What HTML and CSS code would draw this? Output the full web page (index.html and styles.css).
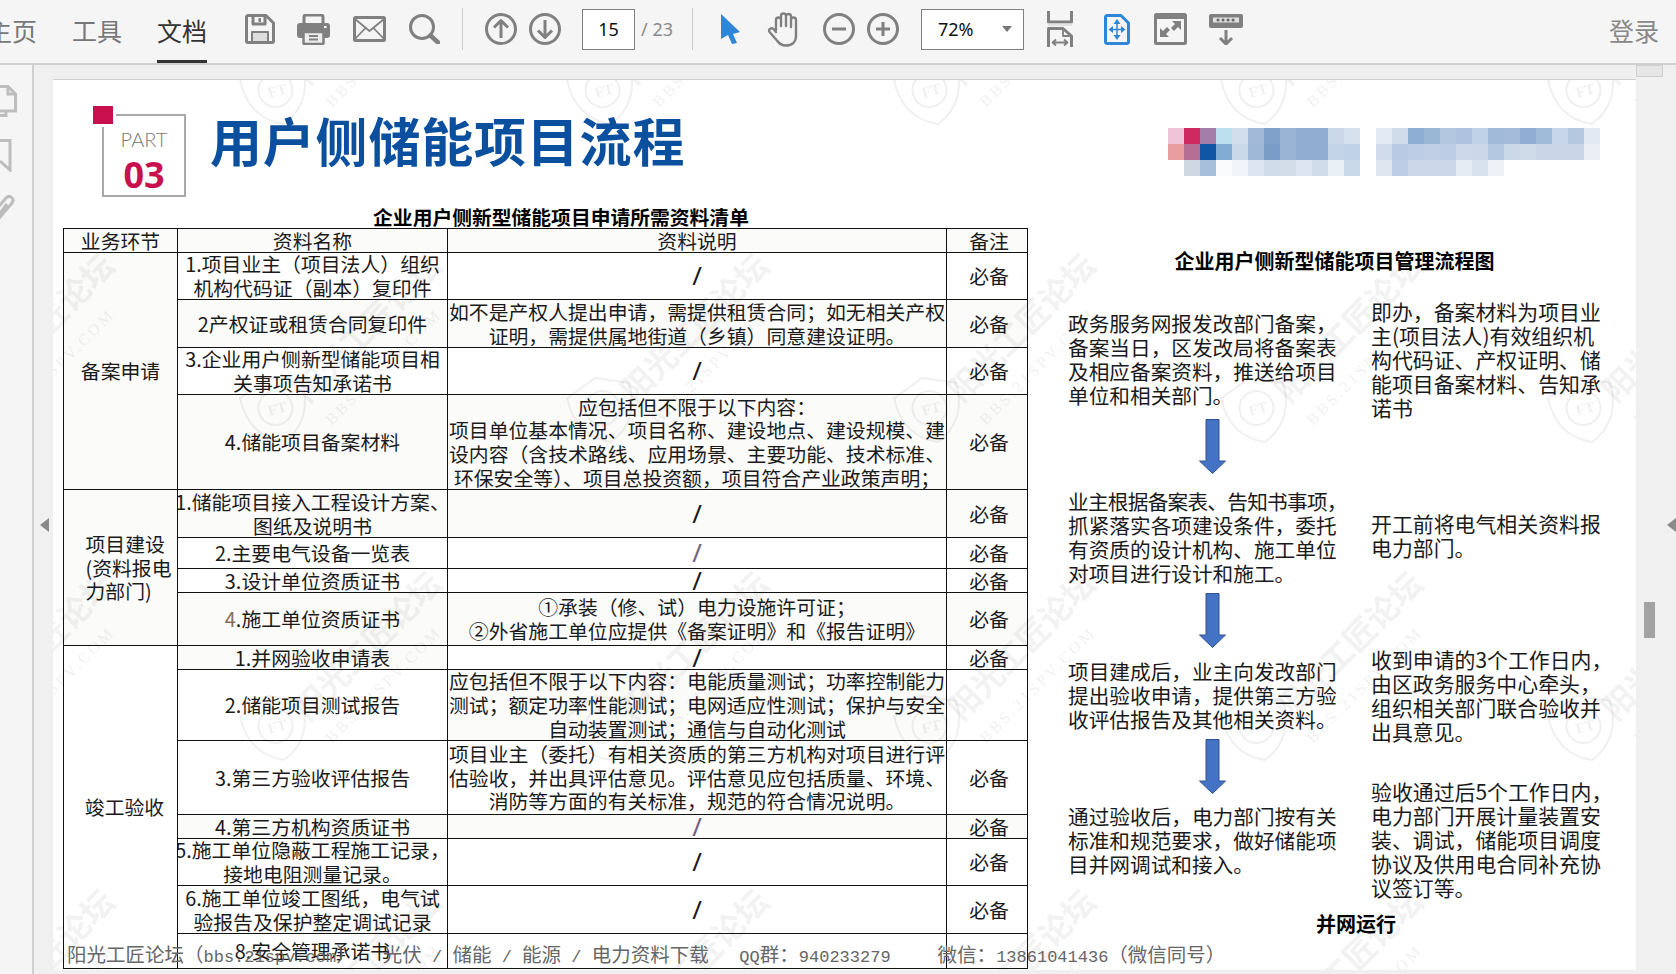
FILE: index.html
```html
<!DOCTYPE html>
<html lang="zh-CN">
<head>
<meta charset="utf-8">
<title>用户侧储能项目流程</title>
<link rel="stylesheet" href="styles.css">
</head>
<body>
<div class="app">
  <header class="toolbar">
    <nav class="tabs">
      <span class="tab">主页</span>
      <span class="tab">工具</span>
      <span class="tab active">文档</span>
    </nav>
    <div class="tools">
      <svg class="ico" width="30" height="30" viewBox="0 0 30 30"><path d="M3 1.5H21L28.5 9V27a1.5 1.5 0 0 1-1.5 1.5H3A1.5 1.5 0 0 1 1.5 27V3A1.5 1.5 0 0 1 3 1.5z"/><path d="M8 2V10H20V2"/><rect class="solid" x="13.5" y="4" width="2.5" height="4"/><rect class="pale" x="7" y="18" width="16" height="10"/></svg>
      <svg class="ico" width="33" height="31" viewBox="0 0 33 31"><path d="M7 10V3a2 2 0 0 1 2-2H24a2 2 0 0 1 2 2V10"/><path class="solid" d="M3 9H30a3 3 0 0 1 3 3V21a3 3 0 0 1-3 3H3a3 3 0 0 1-3-3V12a3 3 0 0 1 3-3z"/><rect class="paper" x="6.5" y="18" width="20" height="12" rx="1"/><path class="thin" d="M12 22H21M12 25.500H21"/><rect class="dot" x="27" y="12" width="2.500" height="2"/></svg>
      <svg class="ico p1" width="33" height="26" viewBox="0 0 33 26"><rect x="1.500" y="1.500" width="30" height="23" rx="1"/><path class="thin" d="M2 3L16.500 15L31 3M2 23L12.500 12M31 23L20.500 12"/></svg>
      <svg class="ico p1" width="31" height="30" viewBox="0 0 31 30"><circle cx="13" cy="13" r="11.500"/><path class="thick" d="M21.500 21.500L29 28.500"/></svg>
      <span class="sep"></span>
      <svg class="ico" width="32" height="32" viewBox="0 0 32 32"><circle cx="16" cy="16" r="14.500"/><path d="M16 25V8M9 14.500L16 7.500L23 14.500"/></svg>
      <svg class="ico near" width="32" height="32" viewBox="0 0 32 32"><circle cx="16" cy="16" r="14.500"/><path d="M16 7V24M9 17.500L16 24.500L23 17.500"/></svg>
      <span class="page-input">15</span>
      <span class="page-total">/ 23</span>
      <span class="sep sep-b"></span>
      <svg class="ico cursor" width="19" height="30" viewBox="0 0 19 30"><path class="blue" d="M0 0L19 18L12 20L16 29L11 30L7 21L0 25Z"/></svg>
      <svg class="ico hand" width="33" height="35" viewBox="0 0 33 35"><path class="mid" d="M9 18V8a2.500 2.500 0 0 1 5 0V14M14 14V4a2.500 2.500 0 0 1 5 0V14M19 14V4.500a2.500 2.500 0 0 1 5 0V15M24 15V8a2.500 2.500 0 0 1 5 0V24c0 6-4 9.500-10 9.500c-5 0-7-2-9-5L2.500 20c-1.500-2.500 2-5 4-3L9 20"/></svg>
      <svg class="ico p1" width="32" height="32" viewBox="0 0 32 32"><circle cx="16" cy="16" r="14.500"/><path d="M9 16H23"/></svg>
      <svg class="ico near" width="32" height="32" viewBox="0 0 32 32"><circle cx="16" cy="16" r="14.500"/><path d="M9 16H23M16 9V23"/></svg>
      <div class="zoom-box"><span>72%</span><i class="caret"></i></div>
      <svg class="ico p1" width="26" height="36" viewBox="0 0 26 36"><path d="M1.500 0V11H24.500V0"/><rect class="band" x="1" y="12.500" width="24" height="2.500"/><path d="M1.500 36V17.500H16L24.500 25V36"/><path class="thin" d="M16 18V25H24M6 31.500H20M9 28.500L5.500 31.500L9 34.500M17 28.500L20.500 31.500L17 34.500"/></svg>
      <svg class="ico wide" width="26" height="31" viewBox="0 0 26 31"><path class="bluestroke" d="M3 1.500H17L24.500 9V28a1.500 1.500 0 0 1-1.500 1.500H3A1.500 1.500 0 0 1 1.500 28V3A1.500 1.500 0 0 1 3 1.500z"/><path class="blue" d="M13 5L16.500 10H9.500ZM13 26L16.500 21H9.500ZM4.500 15.500L9 12V19ZM21.500 15.500L17 12V19Z"/><path class="bluethin" d="M13 10V21M9 15.500H17"/></svg>
      <svg class="ico p2" width="33" height="32" viewBox="0 0 33 32"><rect x="1.500" y="1.500" width="30" height="29" rx="1"/><rect class="solid" x="1" y="1" width="31" height="5"/><path class="solid" d="M18 8H27V17L24 14L20 18L17 15L21 11ZM15 24H6V15L9 18L13 14L16 17L12 21Z"/></svg>
      <svg class="ico" width="34" height="31" viewBox="0 0 34 31"><rect class="solid" x="0" y="0" width="34" height="14" rx="2"/><rect class="pale" x="3" y="2.500" width="28" height="7"/><path class="dots" d="M9 6H9.100M14 6H14.100M19 6H19.100M24 6H24.100"/><path d="M17 16V30M11 24L17 30L23 24"/></svg>
    </div>
    <span class="login">登录</span>
  </header>

  <main class="main">
    <aside class="rail">
      <svg class="rail-ico" width="17" height="32" viewBox="0 0 17 32"><path d="M-10 1.500H8L15.500 9V26H-10"/><path d="M8 2V9H15"/><path d="M-2 26V30.500H6V26"/></svg>
      <svg class="rail-ico" width="12" height="33" viewBox="0 0 12 33"><path d="M-10 1.500H10V31L0 22"/></svg>
      <svg class="rail-ico" width="15" height="30" viewBox="0 0 15 30"><path d="M-4 28L12 9C15 5 10 0 6 4L-6 18M-3 23L7 10"/></svg>
    </aside>

    <section class="viewer">
      <i class="arrow-left"></i>
      <article class="page">
        <div class="page-head">
          <div class="part">
            <i class="part-mark"></i>
            <span class="part-word">PART</span>
            <span class="part-num">03</span>
          </div>
          <h1 class="doc-title">用户侧储能项目流程</h1>
          <svg class="mosaic" width="432" height="48" viewBox="0 0 432 48" shape-rendering="crispEdges">
            <rect x="0" width="16" height="16" fill="#efc4d6"/><rect x="16" width="16" height="16" fill="#cf2962"/><rect x="32" width="16" height="16" fill="#a47ea8"/><rect x="48" width="16" height="16" fill="#bde0ef"/><rect x="64" width="16" height="16" fill="#d3deec"/><rect x="80" width="16" height="16" fill="#a3b9d8"/><rect x="96" width="16" height="16" fill="#80a2ca"/><rect x="112" width="16" height="16" fill="#9ab4d5"/><rect x="128" width="16" height="16" fill="#8fadd1"/><rect x="144" width="16" height="16" fill="#8fadd1"/><rect x="160" width="16" height="16" fill="#cad8e9"/><rect x="176" width="16" height="16" fill="#d5e1ed"/><rect x="208" width="16" height="16" fill="#e3eaf3"/><rect x="224" width="16" height="16" fill="#d0dcea"/><rect x="240" width="16" height="16" fill="#8eadd2"/><rect x="256" width="16" height="16" fill="#9ab6d5"/><rect x="272" width="16" height="16" fill="#b3c7e1"/><rect x="288" width="16" height="16" fill="#aec3df"/><rect x="304" width="16" height="16" fill="#c0d2e7"/><rect x="320" width="16" height="16" fill="#a2bada"/><rect x="336" width="16" height="16" fill="#a4bcda"/><rect x="352" width="16" height="16" fill="#90aed3"/><rect x="368" width="16" height="16" fill="#a0bad9"/><rect x="384" width="16" height="16" fill="#c7d6e8"/><rect x="400" width="16" height="16" fill="#b4c8e0"/><rect x="416" width="16" height="16" fill="#e3e9f2"/>
            <rect x="0" y="16" width="16" height="16" fill="#e89d9f"/><rect x="16" y="16" width="16" height="16" fill="#b56f95"/><rect x="32" y="16" width="16" height="16" fill="#1155a5"/><rect x="48" y="16" width="16" height="16" fill="#83acd4"/><rect x="64" y="16" width="16" height="16" fill="#cad8e9"/><rect x="80" y="16" width="16" height="16" fill="#9fb8d8"/><rect x="96" y="16" width="16" height="16" fill="#7a9dc7"/><rect x="112" y="16" width="16" height="16" fill="#9ab4d5"/><rect x="128" y="16" width="16" height="16" fill="#8fadd1"/><rect x="144" y="16" width="16" height="16" fill="#8fadd1"/><rect x="160" y="16" width="16" height="16" fill="#c4d4e7"/><rect x="176" y="16" width="16" height="16" fill="#c0d2e7"/><rect x="208" y="16" width="16" height="16" fill="#d0dcec"/><rect x="224" y="16" width="16" height="16" fill="#b9cbe4"/><rect x="240" y="16" width="16" height="16" fill="#bccde5"/><rect x="256" y="16" width="16" height="16" fill="#c0cfe5"/><rect x="272" y="16" width="16" height="16" fill="#bccde5"/><rect x="288" y="16" width="16" height="16" fill="#cdd9ea"/><rect x="304" y="16" width="16" height="16" fill="#ccd8ea"/><rect x="320" y="16" width="16" height="16" fill="#b4c8e2"/><rect x="336" y="16" width="16" height="16" fill="#cbd8e8"/><rect x="352" y="16" width="16" height="16" fill="#d0dbea"/><rect x="368" y="16" width="16" height="16" fill="#c8d6e7"/><rect x="384" y="16" width="16" height="16" fill="#c8d6e7"/><rect x="400" y="16" width="16" height="16" fill="#c8d6e7"/><rect x="416" y="16" width="16" height="16" fill="#ebeff5"/>
            <rect x="16" y="32" width="16" height="16" fill="#ced6e2"/><rect x="32" y="32" width="16" height="16" fill="#a8bfdc"/><rect x="48" y="32" width="16" height="16" fill="#fafbfd"/><rect x="64" y="32" width="16" height="16" fill="#f1f4f8"/><rect x="80" y="32" width="16" height="16" fill="#dde5f0"/><rect x="96" y="32" width="16" height="16" fill="#d0dcea"/><rect x="112" y="32" width="16" height="16" fill="#d3ddea"/><rect x="128" y="32" width="16" height="16" fill="#dde5f0"/><rect x="144" y="32" width="16" height="16" fill="#d0dcea"/><rect x="160" y="32" width="16" height="16" fill="#ebf0f6"/><rect x="176" y="32" width="16" height="16" fill="#c9d8e8"/><rect x="208" y="32" width="16" height="16" fill="#dfe6f0"/><rect x="224" y="32" width="16" height="16" fill="#bccde5"/><rect x="240" y="32" width="16" height="16" fill="#ccd8ea"/><rect x="256" y="32" width="16" height="16" fill="#ccd8ea"/><rect x="272" y="32" width="16" height="16" fill="#ccd8ea"/><rect x="288" y="32" width="16" height="16" fill="#e7ecf4"/><rect x="304" y="32" width="16" height="16" fill="#d8e2ef"/><rect x="320" y="32" width="16" height="16" fill="#eef1f6"/>
          </svg>
        </div>

        <h2 class="caption">企业用户侧新型储能项目申请所需资料清单</h2>

        <div class="page-body">
          <table class="sheet">
            <colgroup><col class="c1"><col class="c2"><col class="c3"><col class="c4"></colgroup>
            <tbody>
              <tr class="h24 tint"><td><div class="cell"><span>业务环节</span></div></td><td><div class="cell"><span>资料名称</span></div></td><td><div class="cell"><span>资料说明</span></div></td><td><div class="cell"><span>备注</span></div></td></tr>
              <tr class="h47"><td rowspan="4" class="tint"><div class="cell"><span>备案申请</span></div></td><td><div class="cell"><span>1.项目业主（项目法人）组织<br>机构代码证（副本）复印件</span></div></td><td><div class="cell slash"><span>/</span></div></td><td><div class="cell"><span>必备</span></div></td></tr>
              <tr class="h48 tint"><td><div class="cell"><span>2产权证或租赁合同复印件</span></div></td><td><div class="cell"><span>如不是产权人提出申请，需提供租赁合同；如无相关产权<br>证明，需提供属地街道（乡镇）同意建设证明。</span></div></td><td><div class="cell"><span>必备</span></div></td></tr>
              <tr class="h47"><td><div class="cell"><span>3.企业用户侧新型储能项目相<br>关事项告知承诺书</span></div></td><td><div class="cell slash"><span>/</span></div></td><td><div class="cell"><span>必备</span></div></td></tr>
              <tr class="h95 tint"><td><div class="cell"><span>4.储能项目备案材料</span></div></td><td><div class="cell"><span>应包括但不限于以下内容：<br>项目单位基本情况、项目名称、建设地点、建设规模、建<br>设内容（含技术路线、应用场景、主要功能、技术标准、<br>环保安全等）、项目总投资额，项目符合产业政策声明；</span></div></td><td><div class="cell"><span>必备</span></div></td></tr>
              <tr class="h48 tint"><td rowspan="4"><div class="cell left"><span>项目建设<br>(资料报电<br>力部门)</span></div></td><td><div class="cell"><span>1.储能项目接入工程设计方案、<br>图纸及说明书</span></div></td><td><div class="cell slash"><span>/</span></div></td><td><div class="cell"><span>必备</span></div></td></tr>
              <tr class="h31"><td><div class="cell"><span>2.主要电气设备一览表</span></div></td><td><div class="cell slash"><span class="muted">/</span></div></td><td><div class="cell"><span>必备</span></div></td></tr>
              <tr class="h24"><td><div class="cell"><span>3.设计单位资质证书</span></div></td><td><div class="cell slash"><span>/</span></div></td><td><div class="cell"><span>必备</span></div></td></tr>
              <tr class="h53 tint"><td><div class="cell"><span><em class="brown">4</em>.施工单位资质证书</span></div></td><td><div class="cell"><span>①承装（修、试）电力设施许可证；<br>②外省施工单位应提供《备案证明》和《报告证明》</span></div></td><td><div class="cell"><span>必备</span></div></td></tr>
              <tr class="h24"><td rowspan="8"><div class="cell shift"><span>竣工验收</span></div></td><td class="tint"><div class="cell"><span>1.并网验收申请表</span></div></td><td><div class="cell slash"><span>/</span></div></td><td><div class="cell"><span>必备</span></div></td></tr>
              <tr class="h71"><td><div class="cell"><span>2.储能项目测试报告</span></div></td><td class="tint"><div class="cell"><span>应包括但不限于以下内容：电能质量测试；功率控制能力<br>测试；额定功率性能测试；电网适应性测试；保护与安全<br>自动装置测试；通信与自动化测试</span></div></td><td></td></tr>
              <tr class="h74"><td><div class="cell"><span>3.第三方验收评估报告</span></div></td><td><div class="cell"><span>项目业主（委托）有相关资质的第三方机构对项目进行评<br>估验收，并出具评估意见。评估意见应包括质量、环境、<br>消防等方面的有关标准，规范的符合情况说明。</span></div></td><td><div class="cell"><span>必备</span></div></td></tr>
              <tr class="h24 tint"><td><div class="cell"><span>4.第三方机构资质证书</span></div></td><td><div class="cell slash"><span class="muted">/</span></div></td><td><div class="cell"><span>必备</span></div></td></tr>
              <tr class="h47"><td><div class="cell"><span>5.施工单位隐蔽工程施工记录，<br>接地电阻测量记录。</span></div></td><td><div class="cell slash"><span>/</span></div></td><td><div class="cell"><span>必备</span></div></td></tr>
              <tr class="h48"><td><div class="cell"><span>6.施工单位竣工图纸，电气试<br>验报告及保护整定调试记录</span></div></td><td><div class="cell slash"><span>/</span></div></td><td><div class="cell"><span>必备</span></div></td></tr>
              <tr class="h35"><td><div class="cell"><span>8.安全管理承诺书</span></div></td><td></td><td></td></tr>
            </tbody>
          </table>

          <section class="flow">
            <h3 class="flow-title">企业用户侧新型储能项目管理流程图</h3>
            <div class="flow-cols">
              <div class="flow-col">
                <p class="m38">政务服务网报发改部门备案，<br>备案当日，区发改局将备案表<br>及相应备案资料，推送给项目<br>单位和相关部门。</p>
                <svg class="arrow a12" width="27" height="55" viewBox="0 0 27 55"><path d="M7 .5H20V42H26.500L13.500 54.500L.5 42H7Z"/></svg>
                <p class="m15"><span class="tight">业主根据备案表、告知书事项，</span><br>抓紧落实各项建设条件，委托<br>有资质的设计机构、施工单位<br>对项目进行设计和施工。</p>
                <svg class="arrow a8" width="27" height="55" viewBox="0 0 27 55"><path d="M7 .5H20V42H26.500L13.500 54.500L.5 42H7Z"/></svg>
                <p class="m11">项目建成后，业主向发改部门<br>提出验收申请，提供第三方验<br>收评估报告及其他相关资料。</p>
                <svg class="arrow a8" width="27" height="55" viewBox="0 0 27 55"><path d="M7 .5H20V42H26.500L13.500 54.500L.5 42H7Z"/></svg>
                <p class="m10">通过验收后，电力部门按有关<br>标准和规范要求，做好储能项<br>目并网调试和接入。</p>
              </div>
              <div class="flow-col aside-col">
                <p class="m26">即办，备案材料为项目业<br>主(项目法人)有效组织机<br>构代码证、产权证明、储<br>能项目备案材料、告知承<br>诺书</p>
                <p class="m92">开工前将电气相关资料报<br>电力部门。</p>
                <p class="m88">收到申请的3个工作日内，<br>由区政务服务中心牵头，<br>组织相关部门联合验收并<br>出具意见。</p>
                <p class="m36">验收通过后5个工作日内，<br>电力部门开展计量装置安<br>装、调试，储能项目调度<br>协议及供用电合同补充协<br>议签订等。</p>
              </div>
            </div>
            <h3 class="flow-end">并网运行</h3>
          </section>
        </div>

        <svg class="watermark" width="1583" height="891" aria-hidden="true">
          <defs>
            <pattern id="wm" x="163" y="90" width="327" height="318" patternUnits="userSpaceOnUse">
              <g transform="translate(60 240)">
                <g transform="rotate(-14)">
                  <path class="wm-shield" d="M0-33L32-20C33 5 22 24 0 33C-22 24-33 5-32-20Z"/>
                  <circle class="wm-ring" cx="0" cy="-2" r="17"/>
                  <text class="wm-ft" x="-8" y="4">FT</text>
                </g>
                <text class="wm-big" transform="translate(32 -6) rotate(-45)">阳光工匠论坛</text>
                <text class="wm-small" transform="translate(56 16) rotate(-45)">BBS.21SPV.COM</text>
              </g>
            </pattern>
          </defs>
          <rect width="1583" height="891" fill="url(#wm)"/>
        </svg>

        <div class="footer-note"><span class="zh">阳光工匠论坛（</span>bbs.21spv.com<span class="zh bbs-end">）</span> <span class="zh">光伏</span> / <span class="zh">储能</span> / <span class="zh">能源</span> / <span class="zh">电力资料下载</span>   QQ<span class="zh">群：</span>940233279     <span class="zh wx">微信：</span>13861041436<span class="zh">（微信同号）</span></div>
      </article>
    </section>

    <aside class="scroll">
      <i class="scroll-btn"></i>
      <i class="scroll-thumb"></i>
      <i class="arrow-right"></i>
    </aside>
  </main>
</div>
</body>
</html>
```
FILE: styles.css
```css
* { box-sizing: border-box; }
html, body { margin: 0; padding: 0; height: 100%; overflow: hidden; }
body { font-family: "Noto Sans CJK SC", "Noto Sans", sans-serif; color: #1a1a1a; background: #f0f0f0; }
.app { width: 1676px; height: 974px; display: flex; flex-direction: column; overflow: hidden; }

/* toolbar */
.toolbar { height: 65px; flex: none; display: flex; align-items: flex-start; background: #f5f5f5; border-bottom: 2px solid #cfcfcf; overflow: hidden; }
.tabs { display: flex; gap: 35px; margin-left: -13px; height: 64px; }
.tab { width: 50px; height: 64px; font-size: 25px; line-height: 60px; color: #777; white-space: nowrap; text-align: center; }
.tab.active { color: #333; border-bottom: 4px solid #333; }
.tools { display: flex; align-items: center; gap: 22px; height: 58px; margin-left: 38px; }
.ico { fill: none; stroke: #808080; stroke-width: 3; flex: none; stroke-linejoin: round; }
.ico .solid { fill: #808080; stroke: none; }
.ico .pale { fill: #dedede; stroke: #808080; stroke-width: 2; }
.ico .paper { fill: #ececec; stroke: #808080; stroke-width: 2.5; }
.ico .thin { stroke-width: 1.8; }
.ico .mid { stroke-width: 2.400; stroke-linecap: round; }
.ico .thick { stroke-width: 4.500; stroke-linecap: round; }
.ico .dot { fill: #fff; stroke: none; }
.ico .dots { stroke: #666; stroke-width: 3; stroke-linecap: round; }
.ico .band { fill: #e2e2e2; stroke: none; }
.ico .blue { fill: #2f86d6; stroke: none; }
.ico .bluestroke { stroke: #2f86d6; }
.ico .bluethin { stroke: #2f86d6; stroke-width: 1.500; }
.ico.near { margin-left: -10px; }
.ico.p1 { margin-left: 1px; }
.ico.p2 { margin-left: 2px; }
.ico.cursor { margin-left: 6px; }
.ico.hand { margin-left: 5px; }
.ico.wide { margin-left: 9px; }
.sep { width: 1px; height: 42px; background: #ccc; flex: none; }
.sep-b { margin-left: -2px; }
.page-input { width: 53px; height: 41px; flex: none; background: #fff; border: 1px solid #808080; font: 18px/39px "Noto Sans", sans-serif; text-align: center; color: #111; margin-left: -1px; }
.page-total { width: 31px; font: 18px "Noto Sans", sans-serif; color: #8a8a8a; margin-left: -16px; white-space: nowrap; }
.zoom-box { width: 103px; height: 41px; flex: none; background: #fff; border: 1px solid #808080; display: flex; align-items: center; justify-content: space-between; padding: 0 11px 0 16px; font: 18px "Noto Sans", sans-serif; color: #111; }
.caret { width: 0; height: 0; border-left: 5px solid transparent; border-right: 5px solid transparent; border-top: 6px solid #777; }
.login { margin-left: auto; margin-right: 16px; width: 51px; font-size: 25px; line-height: 60px; color: #888; white-space: nowrap; }

/* main area */
.main { flex: 1; display: flex; min-height: 0; position: relative; }
.rail { width: 34px; flex: none; background: #f5f5f5; border-right: 2px solid #cfcfcf; display: flex; flex-direction: column; gap: 22px; padding-top: 20px; }
.rail-ico { fill: none; stroke: #bdbdbd; stroke-width: 3; overflow: hidden; flex: none; }
.viewer { flex: none; width: 1602px; padding: 14px 0 4px 19px; background: #f0f0f0; position: relative; }
.arrow-left { position: absolute; left: 6px; top: 453px; width: 0; height: 0; border-top: 7px solid transparent; border-bottom: 7px solid transparent; border-right: 9px solid #8a8a8a; }
.arrow-right { position: absolute; right: 0; top: 453px; width: 0; height: 0; border-top: 7px solid transparent; border-bottom: 7px solid transparent; border-right: 9px solid #8a8a8a; }
.page { position: relative; height: 891px; background: #fff; border-top: 1px solid #cfcfcf; padding: 26px 0 0 10px; overflow: hidden; }

.scroll { flex: 1; display: flex; flex-direction: column; align-items: flex-start; background: #f0f0f0; border-left: 0; }
.scroll-btn { width: 27px; height: 12px; background: #e6e6e6; border: 1px solid #cfcfcf; flex: none; }
.scroll-thumb { width: 11px; height: 36px; margin: 525px 0 0 8px; background: #a3a3a3; flex: none; }

/* page header */
.page-head { display: flex; align-items: flex-start; height: 99px; }
.part { position: relative; width: 84px; height: 83px; margin: 8px 0 0 39px; flex: none; border: 2px solid #a9a9a9; display: flex; flex-direction: column; align-items: center; }
.part-mark { position: absolute; left: -11px; top: -10px; width: 20px; height: 18px; background: #c8104e; box-shadow: 0 0 0 3px #fff; }
.part-word { font: 300 20px/24px Lato, sans-serif; color: #777; margin-top: 11px; }
.part-num { font: 700 36px/40px "Noto Sans", sans-serif; color: #c8104e; margin-top: 4px; }
.doc-title { margin: -2px 0 0 24px; font-size: 52px; line-height: 72px; font-weight: 700; letter-spacing: .8px; color: #0b4f9f; white-space: nowrap; }
.mosaic { margin: 22px 36px 0 auto; flex: none; }
.caption { margin: 0 0 -1px; padding-left: 32px; width: 964px; font-size: 19.800px; line-height: 24px; font-weight: 700; color: #000; text-align: center; white-space: nowrap; }

/* body */
.page-body { display: flex; align-items: flex-start; }
.sheet { border-collapse: collapse; table-layout: fixed; width: 964px; flex: none; font-size: 19.85px; line-height: 23.700px; border: 1px solid #000; }
.c1 { width: 114px; } .c2 { width: 270px; } .c3 { width: 499px; } .c4 { width: 81px; }
.sheet td { border: 1px solid #111; padding: 0; overflow: hidden; white-space: nowrap; }
.sheet td:last-child .cell { padding-left: 4px; }
.sheet .tint { background: #fbfbfa; }
.cell { display: flex; justify-content: center; text-align: center; width: 100%; margin: -2px 0; }
.cell.left { padding-left: 16px; }
.cell.left span { text-align: left; }
.cell.shift { padding-left: 8px; }
.cell.slash { font-size: 26px; font-family: "Noto Sans", sans-serif; }
.muted { color: #75607f; }
.brown { color: #8a6d4f; font-style: normal; }
.h24 { height: 24px; } .h31 { height: 31px; } .h35 { height: 35px; } .h47 { height: 47px; } .h48 { height: 48px; } .h53 { height: 53px; } .h71 { height: 71px; } .h74 { height: 74px; } .h95 { height: 95px; }

/* flow chart */
.flow { width: 533px; margin-left: 40px; flex: none; padding-top: 21px; font-size: 20.67px; line-height: 24px; }
.flow-title { margin: 0; font-size: 20px; line-height: 24px; font-weight: 700; text-align: center; color: #000; white-space: nowrap; }
.flow-cols { display: grid; grid-template-columns: 268px 229px; column-gap: 35px; }
.flow-col { display: flex; flex-direction: column; align-items: flex-start; }
.aside-col { font-size: 20.900px; }
.flow-col p { margin: 0; white-space: nowrap; }
.tight { letter-spacing: -.75px; }
.arrow { display: block; margin-left: 131px; flex: none; }
.arrow path { fill: #4472c4; stroke: #2f528f; }
.a12 { margin-top: 12px; } .a8 { margin-top: 8px; }
.flow-col .m10 { margin-top: 10px; } .flow-col .m11 { margin-top: 11px; } .flow-col .m15 { margin-top: 15px; }
.flow-col .m26 { margin-top: 26px; } .flow-col .m36 { margin-top: 36px; } .flow-col .m38 { margin-top: 38px; } .flow-col .m88 { margin-top: 88px; } .flow-col .m92 { margin-top: 92px; }
.flow-end { margin: 13px 0 0; padding-left: 43px; font-size: 20px; line-height: 24px; font-weight: 700; text-align: center; color: #000; }

/* overlays */
.watermark { position: absolute; left: 0; top: 0; pointer-events: none; }
.wm-shield, .wm-ring { fill: none; stroke: rgba(0,0,0,.06); stroke-width: 2; }
.wm-ft { font: 700 15px "Liberation Serif", serif; fill: rgba(0,0,0,.06); }
.wm-big { font: 700 32px "Noto Sans CJK SC", sans-serif; fill: rgba(0,0,0,.05); }
.wm-small { font: 16px "Liberation Serif", serif; letter-spacing: 3px; fill: rgba(0,0,0,.06); }
.footer-note { position: absolute; left: 14px; bottom: 0; font: 17px/24px "Liberation Mono", monospace; color: #666; white-space: pre; }
.zh { font-family: "Noto Sans CJK SC", sans-serif; font-size: 19.500px; }
.bbs-end { margin-right: 17px; }
.wx { margin-left: -4px; }
```
